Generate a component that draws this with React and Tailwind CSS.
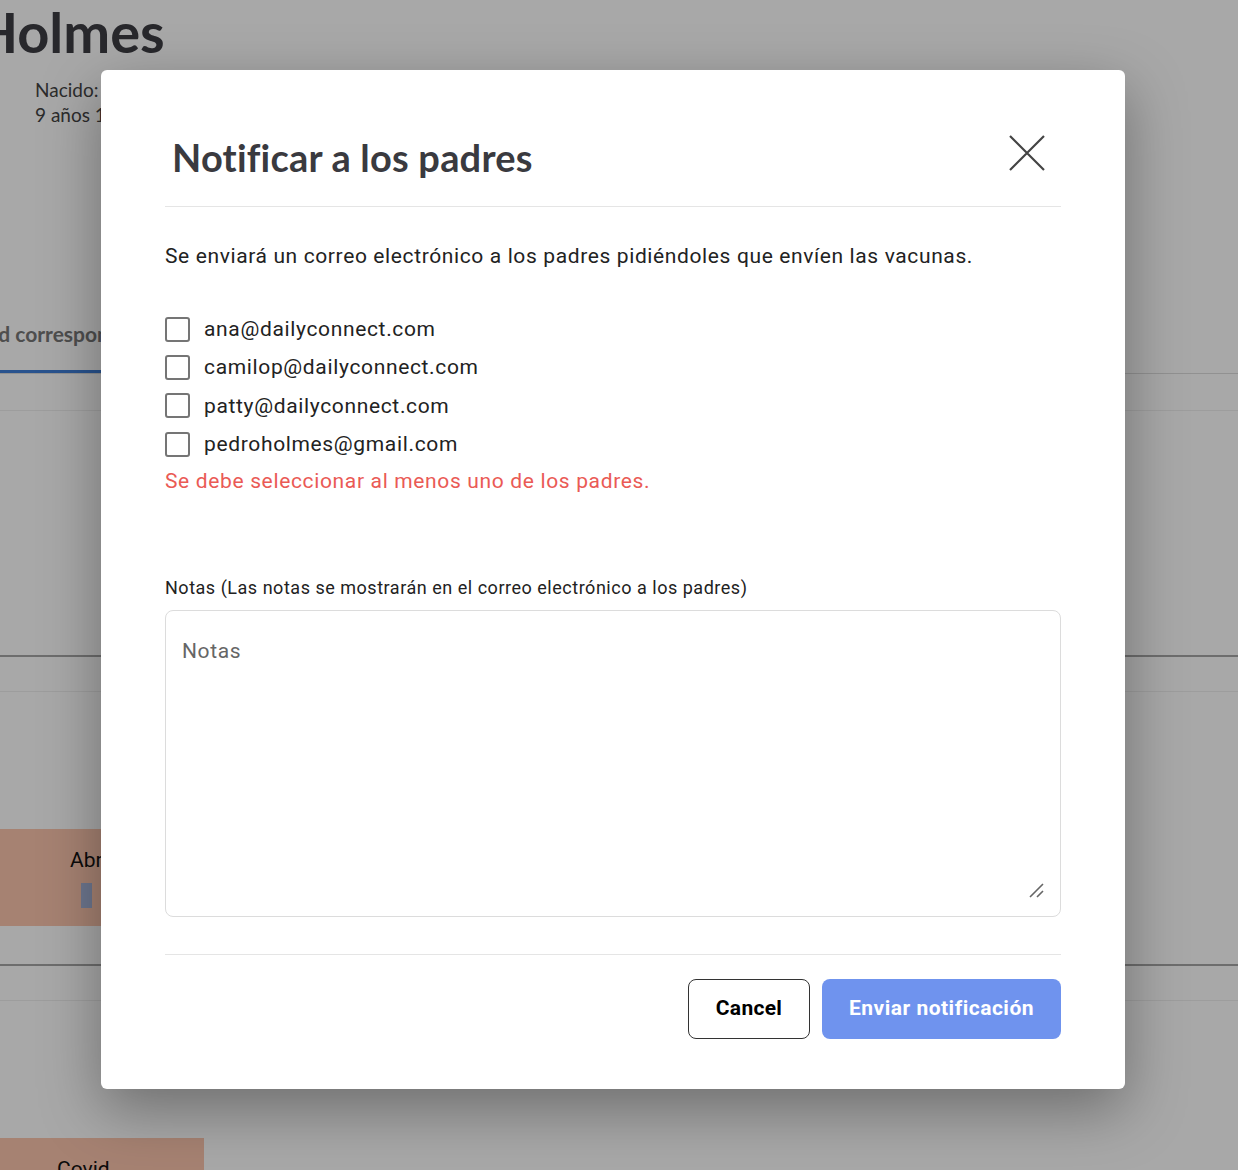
import { useState } from 'react'

const parents = [
  'ana@dailyconnect.com',
  'camilop@dailyconnect.com',
  'patty@dailyconnect.com',
  'pedroholmes@gmail.com',
]

function CloseIcon() {
  return (
    <svg width="36" height="36" viewBox="0 0 36 36" fill="none" stroke="#444" strokeWidth="2.2">
      <path d="M1 1 L35 35 M35 1 L1 35" />
    </svg>
  )
}

function ResizeHandle() {
  return (
    <svg width="16" height="16" viewBox="0 0 16 16" fill="none" stroke="#666" strokeWidth="1.6">
      <path d="M2 15 L15 2 M9 15 L15 9" />
    </svg>
  )
}

function Background() {
  return (
    <div className="font-['Lato',sans-serif] text-[#3f3f46]">
      <h1 className="-ml-[186px] pt-[2px] text-[56px] leading-[60px] font-bold whitespace-nowrap text-[#3e3e44]">
        Pedro Holmes
      </h1>
      <div className="ml-[35px] mt-[15px] text-[19px] leading-[25px] text-[#444]">
        <p>Nacido: 12/03/2015</p>
        <p>9 años 1 mes</p>
      </div>
      <div className="mt-[191px] border-b border-[#ddd]">
        <div className="flex">
          <span className="-ml-[36px] w-[137px] border-b-[3px] border-[#3f7fd8] pb-[20px] text-[21px] font-bold whitespace-nowrap text-[#777]">
            Edad correspondiente
          </span>
        </div>
      </div>
      <div className="mt-[36px] border-t border-[#eee]" />
      <div className="mt-[244px] border-t-2 border-[#a6a6a6]" />
      <div className="mt-[34px] border-t border-[#eee]" />
      <div className="mt-[137px] flex h-[97px] w-[204px] flex-col items-start bg-[#fcc6ae] pl-[70px] pt-[16px] font-['Roboto',sans-serif] text-[#111]">
        <span className="text-[21px] whitespace-nowrap">Abril</span>
        <span className="mt-[7px] ml-[11px] h-[25px] w-[11px] bg-[#a6b3d8]" />
      </div>
      <div className="mt-[38px] border-t-2 border-[#a6a6a6]" />
      <div className="mt-[34px] border-t border-[#eee]" />
      <div className="mt-[137px] flex h-[40px] w-[204px] bg-[#fcc6ae] pl-[57px] pt-[16px] font-['Roboto',sans-serif] text-[21px] text-[#111]">
        Covid
      </div>
    </div>
  )
}

export default function App() {
  const [checked, setChecked] = useState({})

  return (
    <div className="relative h-[1170px] w-full overflow-hidden bg-white">
      <Background />
      <div className="absolute inset-0 bg-black/[0.34]" />

      <div className="absolute left-[101px] top-[70px] flex h-[1019px] w-[1024px] flex-col rounded-[6px] bg-white px-[64px] pb-[50px] font-['Roboto',sans-serif] shadow-[0_20px_60px_rgba(0,0,0,0.35)]">
        <div className="flex items-center justify-between pt-[67px] pb-[29px]">
          <h2 className="pl-[7px] font-['Lato',sans-serif] text-[38px] leading-[40px] font-bold tracking-[0.2px] text-[#3a3a3f]">
            Notificar a los padres
          </h2>
          <button type="button" className="mr-[16px] -mt-[8px]">
            <CloseIcon />
          </button>
        </div>

        <div className="border-t border-[#e5e5e5]" />

        <p className="mt-[37px] text-[21px] leading-[24px] tracking-[0.62px] text-[#222]">
          Se enviará un correo electrónico a los padres pidiéndoles que envíen las vacunas.
        </p>

        <div className="mt-[42px] flex flex-col">
          {parents.map((email) => (
            <label key={email} className="flex h-[38.3px] cursor-pointer items-center gap-[14px]">
              <input
                type="checkbox"
                checked={!!checked[email]}
                onChange={() => setChecked({ ...checked, [email]: !checked[email] })}
                className="sr-only"
              />
              <span className="h-[25px] w-[25px] rounded-[3px] border-2 border-[#757575]" />
              <span className="text-[21px] leading-[24px] tracking-[0.65px] text-[#222]">{email}</span>
            </label>
          ))}
        </div>

        <p className="mt-[6px] text-[21px] leading-[24px] tracking-[0.65px] text-[#ea5a55]">
          Se debe seleccionar al menos uno de los padres.
        </p>

        <p className="mt-[83px] text-[18px] leading-[24px] tracking-[0.52px] text-[#222]">
          Notas (Las notas se mostrarán en el correo electrónico a los padres)
        </p>

        <div className="relative mt-[10px] h-[309px] rounded-[8px] border border-[#dcdcdc]">
          <textarea
            placeholder="Notas"
            className="h-full w-full resize-none rounded-[8px] px-[16px] pt-[28px] text-[21px] leading-[24px] tracking-[0.6px] text-[#222] outline-none placeholder:text-[#666]"
          />
          <span className="absolute right-[16px] bottom-[18px]">
            <ResizeHandle />
          </span>
        </div>

        <div className="mt-[37px] border-t border-[#e5e5e5]" />

        <div className="mt-[24px] flex justify-end gap-[12px]">
          <button
            type="button"
            className="h-[60px] w-[122px] rounded-[8px] border border-[#333] text-[21px] font-bold tracking-[0.3px] text-black"
          >
            Cancel
          </button>
          <button
            type="button"
            className="h-[60px] w-[239px] rounded-[8px] bg-[#6f93ee] text-[21px] font-bold tracking-[0.5px] text-white"
          >
            Enviar notificación
          </button>
        </div>
      </div>
    </div>
  )
}
